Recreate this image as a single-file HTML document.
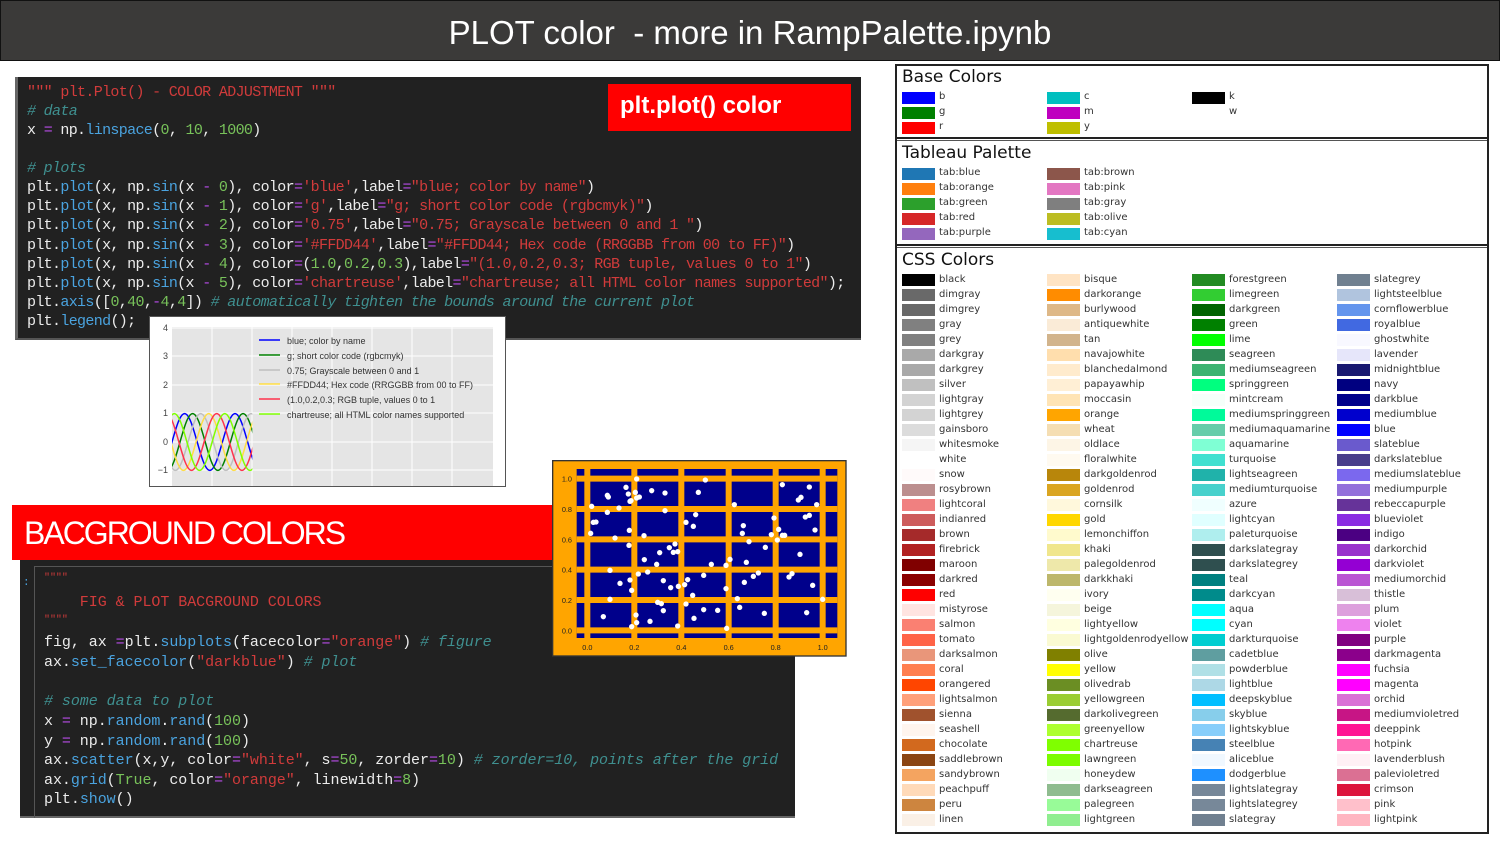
<!DOCTYPE html>
<html><head><meta charset="utf-8"><style>
*{margin:0;padding:0;box-sizing:border-box}
body{width:1500px;height:844px;background:#fff;position:relative;overflow:hidden;font-family:"Liberation Sans",sans-serif}
.hdr{position:absolute;left:0;top:0;width:1500px;height:61px;background:#3b3a39;border:1px solid #111;color:#fff;font-size:33px;text-align:center;line-height:64px}
.code{position:absolute;background:#212121;font-family:"Liberation Mono",monospace;color:#ececec;white-space:pre}
.code div{position:absolute;left:0;height:20px;line-height:20px}
.s{color:#d13b3b}.n{color:#78c25a}.f{color:#4aa3df}.c{color:#3f9090;font-style:italic}.o{color:#b64be6}
.sw{position:absolute;width:33px;height:12px}
.lb{position:absolute;font-family:"DejaVu Sans",sans-serif;font-size:10px;color:#333;line-height:12px}
.ttl{position:absolute;font-family:"DejaVu Sans",sans-serif;font-size:17px;color:#111}
</style></head><body>
<div class="hdr">PLOT color&nbsp; - more in RampPalette.ipynb</div>

<!-- code block 1 -->
<div class="code" style="left:15px;top:77px;width:846px;height:263px;border-left:3px solid #666;border-bottom:2px solid #555;font-size:15px;letter-spacing:-0.66px">
<div style="left:9px;top:6px" class="s">""" plt.Plot() - COLOR ADJUSTMENT """</div>
<div style="left:9px;top:25px" class="c"># data</div>
<div style="left:9px;top:44px">x <span class="o">=</span> np.<span class="f">linspace</span>(<span class="n">0</span>, <span class="n">10</span>, <span class="n">1000</span>)</div>
<div style="left:9px;top:82px" class="c"># plots</div>
<div style="left:9px;top:101px">plt.<span class="f">plot</span>(x, np.<span class="f">sin</span>(x <span class="o">-</span> <span class="n">0</span>), color<span class="o">=</span><span class="s">'blue'</span>,label<span class="o">=</span><span class="s">"blue; color by name"</span>)</div>
<div style="left:9px;top:120px">plt.<span class="f">plot</span>(x, np.<span class="f">sin</span>(x <span class="o">-</span> <span class="n">1</span>), color<span class="o">=</span><span class="s">'g'</span>,label<span class="o">=</span><span class="s">"g; short color code (rgbcmyk)"</span>)</div>
<div style="left:9px;top:139px">plt.<span class="f">plot</span>(x, np.<span class="f">sin</span>(x <span class="o">-</span> <span class="n">2</span>), color<span class="o">=</span><span class="s">'0.75'</span>,label<span class="o">=</span><span class="s">"0.75; Grayscale between 0 and 1 "</span>)</div>
<div style="left:9px;top:159px">plt.<span class="f">plot</span>(x, np.<span class="f">sin</span>(x <span class="o">-</span> <span class="n">3</span>), color<span class="o">=</span><span class="s">'#FFDD44'</span>,label<span class="o">=</span><span class="s">"#FFDD44; Hex code (RRGGBB from 00 to FF)"</span>)</div>
<div style="left:9px;top:178px">plt.<span class="f">plot</span>(x, np.<span class="f">sin</span>(x <span class="o">-</span> <span class="n">4</span>), color<span class="o">=</span>(<span class="n">1.0</span>,<span class="n">0.2</span>,<span class="n">0.3</span>),label<span class="o">=</span><span class="s">"(1.0,0.2,0.3; RGB tuple, values 0 to 1"</span>)</div>
<div style="left:9px;top:197px">plt.<span class="f">plot</span>(x, np.<span class="f">sin</span>(x <span class="o">-</span> <span class="n">5</span>), color<span class="o">=</span><span class="s">'chartreuse'</span>,label<span class="o">=</span><span class="s">"chartreuse; all HTML color names supported"</span>);</div>
<div style="left:9px;top:216px">plt.<span class="f">axis</span>([<span class="n">0</span>,<span class="n">40</span>,<span class="o">-</span><span class="n">4</span>,<span class="n">4</span>]) <span class="c"># automatically tighten the bounds around the current plot</span></div>
<div style="left:9px;top:235px">plt.<span class="f">legend</span>();</div>
</div>
<div style="position:absolute;left:608px;top:84px;width:243px;height:47px;background:#f00;color:#fff;font-weight:bold;font-size:24px;line-height:44px;padding-left:12px">plt.plot() color</div>

<!-- legend plot -->
<div style="position:absolute;left:149px;top:316px;width:357px;height:171px;background:#fff;border:1px solid #555"></div>
<svg style="position:absolute;left:150px;top:317px" width="355" height="169" viewBox="150 317 355 169">
<defs><clipPath id="cp"><rect x="0" y="-40" width="80.3" height="80"/></clipPath></defs>
<rect x="172" y="327" width="321" height="159" fill="#e5e5e5"/>
<g stroke="#fff" stroke-width="1">
<line x1="172" y1="328" x2="493" y2="328"/><line x1="172" y1="356" x2="493" y2="356"/><line x1="172" y1="385" x2="493" y2="385"/><line x1="172" y1="413" x2="493" y2="413"/><line x1="172" y1="442" x2="493" y2="442"/><line x1="172" y1="470" x2="493" y2="470"/>
<line x1="212" y1="327" x2="212" y2="486"/><line x1="252" y1="327" x2="252" y2="486"/><line x1="292" y1="327" x2="292" y2="486"/><line x1="332" y1="327" x2="332" y2="486"/><line x1="372" y1="327" x2="372" y2="486"/><line x1="412" y1="327" x2="412" y2="486"/><line x1="452" y1="327" x2="452" y2="486"/>
</g>
<g font-family="Liberation Sans" font-size="9" fill="#444" text-anchor="end">
<text x="168" y="331">4</text><text x="168" y="359">3</text><text x="168" y="388">2</text><text x="168" y="416">1</text><text x="168" y="445">0</text><text x="168" y="473">−1</text></g>
<g transform="translate(172,442)" clip-path="url(#cp)" fill="none" stroke-width="1.5">
<defs><path id="sn" d="M-100.9,0 c4.114,-14.55 8.049,-28.4 12.61,-28.4 s8.5,13.85 12.61,28.4 s8.049,28.4 12.61,28.4 s8.5,-13.85 12.61,-28.4 s8.049,-28.4 12.61,-28.4 s8.5,13.85 12.61,28.4 s8.049,28.4 12.61,28.4 s8.5,-13.85 12.61,-28.4 s8.049,-28.4 12.61,-28.4 s8.5,13.85 12.61,28.4 s8.049,28.4 12.61,28.4 s8.5,-13.85 12.61,-28.4 s8.049,-28.4 12.61,-28.4 s8.5,13.85 12.61,28.4 s8.049,28.4 12.61,28.4 s8.5,-13.85 12.61,-28.4"/></defs>
<use href="#sn" stroke="#00f"/>
<use href="#sn" stroke="#008000" transform="translate(8.03,0)"/>
<use href="#sn" stroke="#bfbfbf" transform="translate(16.06,0)"/>
<use href="#sn" stroke="#FFDD44" transform="translate(24.09,0)"/>
<use href="#sn" stroke="rgb(255,51,77)" transform="translate(32.12,0)"/>
<use href="#sn" stroke="#7fff00" transform="translate(40.15,0)"/>
</g>
<g stroke-width="1.5">
<line x1="259" y1="340" x2="280" y2="340" stroke="#00f"/><line x1="259" y1="355" x2="280" y2="355" stroke="#008000"/><line x1="259" y1="370" x2="280" y2="370" stroke="#bfbfbf"/><line x1="259" y1="384" x2="280" y2="384" stroke="#FFDD44"/><line x1="259" y1="399" x2="280" y2="399" stroke="rgb(255,51,77)"/><line x1="259" y1="414" x2="280" y2="414" stroke="#7fff00"/>
</g>
<g font-family="Liberation Sans" font-size="9" fill="#333">
<text x="287" y="344">blue; color by name</text><text x="287" y="359">g; short color code (rgbcmyk)</text><text x="287" y="374">0.75; Grayscale between 0 and 1</text><text x="287" y="388">#FFDD44; Hex code (RRGGBB from 00 to FF)</text><text x="287" y="403">(1.0,0.2,0.3; RGB tuple, values 0 to 1</text><text x="287" y="418">chartreuse; all HTML color names supported</text>
</g>
</svg>

<!-- background colors -->
<div style="position:absolute;left:12px;top:505px;width:545px;height:55px;background:#f00;color:#fff;font-size:32px;line-height:56px;padding-left:12px;letter-spacing:-2px">BACGROUND COLORS</div>
<div class="code" style="left:20px;top:560px;width:775px;height:258px;border-bottom:2px solid #666;font-size:15px;letter-spacing:-0.05px">
<div style="left:3px;top:13px;color:#4aa3df;font-size:11px">:</div>
<div style="left:14px;top:6px;width:761px;height:252px;border:1px solid #555;border-right:none;border-bottom:none"></div>
<div style="left:24px;top:9px;font-size:10px" class="s">""""</div>
<div style="left:24px;top:33px" class="s">    FIG &amp; PLOT BACGROUND COLORS</div>
<div style="left:24px;top:51px;font-size:10px" class="s">""""</div>
<div style="left:24px;top:73px">fig, ax <span class="o">=</span>plt.<span class="f">subplots</span>(facecolor<span class="o">=</span><span class="s">"orange"</span>) <span class="c"># figure</span></div>
<div style="left:24px;top:93px">ax.<span class="f">set_facecolor</span>(<span class="s">"darkblue"</span>) <span class="c"># plot</span></div>
<div style="left:24px;top:132px" class="c"># some data to plot</div>
<div style="left:24px;top:152px">x <span class="o">=</span> np.<span class="f">random</span>.<span class="f">rand</span>(<span class="n">100</span>)</div>
<div style="left:24px;top:172px">y <span class="o">=</span> np.<span class="f">random</span>.<span class="f">rand</span>(<span class="n">100</span>)</div>
<div style="left:24px;top:191px">ax.<span class="f">scatter</span>(x,y, color<span class="o">=</span><span class="s">"white"</span>, s<span class="o">=</span><span class="n">50</span>, zorder<span class="o">=</span><span class="n">10</span>) <span class="c"># zorder=10, points after the grid</span></div>
<div style="left:24px;top:211px">ax.<span class="f">grid</span>(<span class="n">True</span>, color<span class="o">=</span><span class="s">"orange"</span>, linewidth<span class="o">=</span><span class="n">8</span>)</div>
<div style="left:24px;top:230px">plt.<span class="f">show</span>()</div>
</div>

<!-- scatter -->
<svg style="position:absolute;left:550px;top:458px" width="300" height="202" viewBox="0 0 900 606">
<rect x="8" y="8" width="880" height="586" fill="#ffa500" stroke="#333" stroke-width="4"/>
<rect x="80" y="33" width="782" height="507" fill="#00008b"/>
<g stroke="#ffa500" stroke-width="18">
<line x1="112" y1="33" x2="112" y2="540"/><line x1="253" y1="33" x2="253" y2="540"/><line x1="394" y1="33" x2="394" y2="540"/><line x1="536" y1="33" x2="536" y2="540"/><line x1="677" y1="33" x2="677" y2="540"/><line x1="818" y1="33" x2="818" y2="540"/>
<line x1="80" y1="62" x2="862" y2="62"/><line x1="80" y1="153" x2="862" y2="153"/><line x1="80" y1="244" x2="862" y2="244"/><line x1="80" y1="335" x2="862" y2="335"/><line x1="80" y1="426" x2="862" y2="426"/><line x1="80" y1="517" x2="862" y2="517"/>
</g>
<g fill="#fff">
<circle cx="260" cy="63" r="8"/><circle cx="466" cy="66" r="8"/><circle cx="228" cy="88" r="8"/><circle cx="235" cy="108" r="8"/><circle cx="256" cy="103" r="8"/><circle cx="305" cy="98" r="8"/><circle cx="345" cy="105" r="8"/><circle cx="445" cy="103" r="8"/><circle cx="172" cy="112" r="8"/><circle cx="175" cy="117" r="8"/><circle cx="240" cy="130" r="8"/><circle cx="260" cy="120" r="8"/><circle cx="268" cy="117" r="8"/><circle cx="243" cy="128" r="8"/><circle cx="125" cy="145" r="8"/><circle cx="207" cy="150" r="8"/><circle cx="172" cy="163" r="8"/><circle cx="345" cy="158" r="8"/><circle cx="553" cy="140" r="8"/><circle cx="697" cy="80" r="8"/><circle cx="778" cy="87" r="8"/><circle cx="745" cy="126" r="8"/><circle cx="753" cy="118" r="8"/><circle cx="800" cy="140" r="8"/><circle cx="672" cy="180" r="8"/><circle cx="437" cy="170" r="8"/><circle cx="408" cy="193" r="8"/><circle cx="430" cy="205" r="8"/><circle cx="130" cy="193" r="8"/><circle cx="138" cy="192" r="8"/><circle cx="122" cy="226" r="8"/><circle cx="195" cy="240" r="8"/><circle cx="238" cy="217" r="8"/><circle cx="282" cy="233" r="8"/><circle cx="580" cy="203" r="8"/><circle cx="577" cy="226" r="8"/><circle cx="686" cy="214" r="8"/><circle cx="664" cy="230" r="8"/><circle cx="697" cy="232" r="8"/><circle cx="704" cy="232" r="8"/><circle cx="682" cy="246" r="8"/><circle cx="597" cy="251" r="8"/><circle cx="646" cy="268" r="8"/><circle cx="795" cy="216" r="8"/><circle cx="766" cy="177" r="8"/><circle cx="778" cy="172" r="8"/><circle cx="237" cy="262" r="8"/><circle cx="358" cy="269" r="8"/><circle cx="375" cy="258" r="8"/><circle cx="370" cy="283" r="8"/><circle cx="383" cy="281" r="8"/><circle cx="329" cy="284" r="8"/><circle cx="283" cy="305" r="8"/><circle cx="320" cy="319" r="8"/><circle cx="540" cy="304" r="8"/><circle cx="528" cy="322" r="8"/><circle cx="484" cy="319" r="8"/><circle cx="589" cy="313" r="8"/><circle cx="750" cy="289" r="8"/><circle cx="180" cy="337" r="8"/><circle cx="265" cy="348" r="8"/><circle cx="293" cy="342" r="8"/><circle cx="240" cy="366" r="8"/><circle cx="210" cy="376" r="8"/><circle cx="340" cy="368" r="8"/><circle cx="413" cy="365" r="8"/><circle cx="362" cy="389" r="8"/><circle cx="385" cy="385" r="8"/><circle cx="404" cy="380" r="8"/><circle cx="461" cy="352" r="8"/><circle cx="610" cy="355" r="8"/><circle cx="625" cy="345" r="8"/><circle cx="583" cy="373" r="8"/><circle cx="717" cy="357" r="8"/><circle cx="726" cy="347" r="8"/><circle cx="788" cy="382" r="8"/><circle cx="245" cy="397" r="8"/><circle cx="428" cy="412" r="8"/><circle cx="528" cy="392" r="8"/><circle cx="562" cy="422" r="8"/><circle cx="180" cy="424" r="8"/><circle cx="323" cy="433" r="8"/><circle cx="334" cy="437" r="8"/><circle cx="340" cy="458" r="8"/><circle cx="408" cy="438" r="8"/><circle cx="461" cy="455" r="8"/><circle cx="503" cy="457" r="8"/><circle cx="569" cy="448" r="8"/><circle cx="643" cy="466" r="8"/><circle cx="770" cy="464" r="8"/><circle cx="160" cy="476" r="8"/><circle cx="258" cy="471" r="8"/><circle cx="300" cy="490" r="8"/><circle cx="245" cy="506" r="8"/><circle cx="260" cy="494" r="8"/><circle cx="383" cy="504" r="8"/><circle cx="432" cy="481" r="8"/><circle cx="530" cy="511" r="8"/><circle cx="818" cy="424" r="8"/>
</g>
<g font-family="Liberation Sans" font-size="22" fill="#222">
<text x="66" y="71" text-anchor="end">1.0</text><text x="66" y="162" text-anchor="end">0.8</text><text x="66" y="253" text-anchor="end">0.6</text><text x="66" y="344" text-anchor="end">0.4</text><text x="66" y="435" text-anchor="end">0.2</text><text x="66" y="526" text-anchor="end">0.0</text>
<g text-anchor="middle"><text x="112" y="576">0.0</text><text x="253" y="576">0.2</text><text x="394" y="576">0.4</text><text x="536" y="576">0.6</text><text x="677" y="576">0.8</text><text x="818" y="576">1.0</text></g>
</g>
</svg>

<!-- color panel -->
<div style="position:absolute;left:895px;top:64px;width:594px;height:770px;border:2px solid #222;background:#fff"></div>
<div style="position:absolute;left:897px;top:137px;width:590px;height:4px;border-top:2px solid #222;border-bottom:1px solid #555"></div>
<div style="position:absolute;left:897px;top:244px;width:590px;height:4px;border-top:2px solid #222;border-bottom:1px solid #555"></div>
<div class="ttl" style="left:902px;top:67px">Base Colors</div>
<div class="ttl" style="left:902px;top:143px">Tableau Palette</div>
<div class="ttl" style="left:902px;top:250px">CSS Colors</div>
<div style="position:absolute;left:0;top:2px">
<div class="sw" style="left:902px;top:90px;background:#00f"></div><div class="lb" style="left:939px;top:89px">b</div>
<div class="sw" style="left:902px;top:105px;background:#008000"></div><div class="lb" style="left:939px;top:104px">g</div>
<div class="sw" style="left:902px;top:120px;background:#f00"></div><div class="lb" style="left:939px;top:119px">r</div>
<div class="sw" style="left:1047px;top:90px;background:#00bfbf"></div><div class="lb" style="left:1084px;top:89px">c</div>
<div class="sw" style="left:1047px;top:105px;background:#bf00bf"></div><div class="lb" style="left:1084px;top:104px">m</div>
<div class="sw" style="left:1047px;top:120px;background:#bfbf00"></div><div class="lb" style="left:1084px;top:119px">y</div>
<div class="sw" style="left:1192px;top:90px;background:#000"></div><div class="lb" style="left:1229px;top:89px">k</div>
<div class="lb" style="left:1229px;top:104px">w</div>
<div class="sw" style="left:902px;top:166px;background:#1f77b4"></div><div class="lb" style="left:939px;top:165px">tab:blue</div>
<div class="sw" style="left:902px;top:181px;background:#ff7f0e"></div><div class="lb" style="left:939px;top:180px">tab:orange</div>
<div class="sw" style="left:902px;top:196px;background:#2ca02c"></div><div class="lb" style="left:939px;top:195px">tab:green</div>
<div class="sw" style="left:902px;top:211px;background:#d62728"></div><div class="lb" style="left:939px;top:210px">tab:red</div>
<div class="sw" style="left:902px;top:226px;background:#9467bd"></div><div class="lb" style="left:939px;top:225px">tab:purple</div>
<div class="sw" style="left:1047px;top:166px;background:#8c564b"></div><div class="lb" style="left:1084px;top:165px">tab:brown</div>
<div class="sw" style="left:1047px;top:181px;background:#e377c2"></div><div class="lb" style="left:1084px;top:180px">tab:pink</div>
<div class="sw" style="left:1047px;top:196px;background:#7f7f7f"></div><div class="lb" style="left:1084px;top:195px">tab:gray</div>
<div class="sw" style="left:1047px;top:211px;background:#bcbd22"></div><div class="lb" style="left:1084px;top:210px">tab:olive</div>
<div class="sw" style="left:1047px;top:226px;background:#17becf"></div><div class="lb" style="left:1084px;top:225px">tab:cyan</div>
</div>
<div style="position:absolute;left:902px;top:274px;width:580px;display:grid;grid-template-columns:145px 145px 145px 145px;grid-template-rows:repeat(37,15px);grid-auto-flow:column;font-family:'DejaVu Sans',sans-serif;font-size:10px;color:#333">
<style>.r{position:relative;height:15px}.r i{position:absolute;left:0;top:0;width:33px;height:12px}.r b{position:absolute;left:37px;top:0;font-weight:normal;line-height:12px;white-space:nowrap}</style>
<div class="r"><i style="background:black"></i><b>black</b></div><div class="r"><i style="background:dimgray"></i><b>dimgray</b></div><div class="r"><i style="background:dimgrey"></i><b>dimgrey</b></div><div class="r"><i style="background:gray"></i><b>gray</b></div><div class="r"><i style="background:grey"></i><b>grey</b></div><div class="r"><i style="background:darkgray"></i><b>darkgray</b></div><div class="r"><i style="background:darkgrey"></i><b>darkgrey</b></div><div class="r"><i style="background:silver"></i><b>silver</b></div><div class="r"><i style="background:lightgray"></i><b>lightgray</b></div><div class="r"><i style="background:lightgrey"></i><b>lightgrey</b></div><div class="r"><i style="background:gainsboro"></i><b>gainsboro</b></div><div class="r"><i style="background:whitesmoke"></i><b>whitesmoke</b></div><div class="r"><i style="background:white"></i><b>white</b></div><div class="r"><i style="background:snow"></i><b>snow</b></div><div class="r"><i style="background:rosybrown"></i><b>rosybrown</b></div><div class="r"><i style="background:lightcoral"></i><b>lightcoral</b></div><div class="r"><i style="background:indianred"></i><b>indianred</b></div><div class="r"><i style="background:brown"></i><b>brown</b></div><div class="r"><i style="background:firebrick"></i><b>firebrick</b></div><div class="r"><i style="background:maroon"></i><b>maroon</b></div><div class="r"><i style="background:darkred"></i><b>darkred</b></div><div class="r"><i style="background:red"></i><b>red</b></div><div class="r"><i style="background:mistyrose"></i><b>mistyrose</b></div><div class="r"><i style="background:salmon"></i><b>salmon</b></div><div class="r"><i style="background:tomato"></i><b>tomato</b></div><div class="r"><i style="background:darksalmon"></i><b>darksalmon</b></div><div class="r"><i style="background:coral"></i><b>coral</b></div><div class="r"><i style="background:orangered"></i><b>orangered</b></div><div class="r"><i style="background:lightsalmon"></i><b>lightsalmon</b></div><div class="r"><i style="background:sienna"></i><b>sienna</b></div><div class="r"><i style="background:seashell"></i><b>seashell</b></div><div class="r"><i style="background:chocolate"></i><b>chocolate</b></div><div class="r"><i style="background:saddlebrown"></i><b>saddlebrown</b></div><div class="r"><i style="background:sandybrown"></i><b>sandybrown</b></div><div class="r"><i style="background:peachpuff"></i><b>peachpuff</b></div><div class="r"><i style="background:peru"></i><b>peru</b></div><div class="r"><i style="background:linen"></i><b>linen</b></div>
<div class="r"><i style="background:bisque"></i><b>bisque</b></div><div class="r"><i style="background:darkorange"></i><b>darkorange</b></div><div class="r"><i style="background:burlywood"></i><b>burlywood</b></div><div class="r"><i style="background:antiquewhite"></i><b>antiquewhite</b></div><div class="r"><i style="background:tan"></i><b>tan</b></div><div class="r"><i style="background:navajowhite"></i><b>navajowhite</b></div><div class="r"><i style="background:blanchedalmond"></i><b>blanchedalmond</b></div><div class="r"><i style="background:papayawhip"></i><b>papayawhip</b></div><div class="r"><i style="background:moccasin"></i><b>moccasin</b></div><div class="r"><i style="background:orange"></i><b>orange</b></div><div class="r"><i style="background:wheat"></i><b>wheat</b></div><div class="r"><i style="background:oldlace"></i><b>oldlace</b></div><div class="r"><i style="background:floralwhite"></i><b>floralwhite</b></div><div class="r"><i style="background:darkgoldenrod"></i><b>darkgoldenrod</b></div><div class="r"><i style="background:goldenrod"></i><b>goldenrod</b></div><div class="r"><i style="background:cornsilk"></i><b>cornsilk</b></div><div class="r"><i style="background:gold"></i><b>gold</b></div><div class="r"><i style="background:lemonchiffon"></i><b>lemonchiffon</b></div><div class="r"><i style="background:khaki"></i><b>khaki</b></div><div class="r"><i style="background:palegoldenrod"></i><b>palegoldenrod</b></div><div class="r"><i style="background:darkkhaki"></i><b>darkkhaki</b></div><div class="r"><i style="background:ivory"></i><b>ivory</b></div><div class="r"><i style="background:beige"></i><b>beige</b></div><div class="r"><i style="background:lightyellow"></i><b>lightyellow</b></div><div class="r"><i style="background:lightgoldenrodyellow"></i><b>lightgoldenrodyellow</b></div><div class="r"><i style="background:olive"></i><b>olive</b></div><div class="r"><i style="background:yellow"></i><b>yellow</b></div><div class="r"><i style="background:olivedrab"></i><b>olivedrab</b></div><div class="r"><i style="background:yellowgreen"></i><b>yellowgreen</b></div><div class="r"><i style="background:darkolivegreen"></i><b>darkolivegreen</b></div><div class="r"><i style="background:greenyellow"></i><b>greenyellow</b></div><div class="r"><i style="background:chartreuse"></i><b>chartreuse</b></div><div class="r"><i style="background:lawngreen"></i><b>lawngreen</b></div><div class="r"><i style="background:honeydew"></i><b>honeydew</b></div><div class="r"><i style="background:darkseagreen"></i><b>darkseagreen</b></div><div class="r"><i style="background:palegreen"></i><b>palegreen</b></div><div class="r"><i style="background:lightgreen"></i><b>lightgreen</b></div>
<div class="r"><i style="background:forestgreen"></i><b>forestgreen</b></div><div class="r"><i style="background:limegreen"></i><b>limegreen</b></div><div class="r"><i style="background:darkgreen"></i><b>darkgreen</b></div><div class="r"><i style="background:green"></i><b>green</b></div><div class="r"><i style="background:lime"></i><b>lime</b></div><div class="r"><i style="background:seagreen"></i><b>seagreen</b></div><div class="r"><i style="background:mediumseagreen"></i><b>mediumseagreen</b></div><div class="r"><i style="background:springgreen"></i><b>springgreen</b></div><div class="r"><i style="background:mintcream"></i><b>mintcream</b></div><div class="r"><i style="background:mediumspringgreen"></i><b>mediumspringgreen</b></div><div class="r"><i style="background:mediumaquamarine"></i><b>mediumaquamarine</b></div><div class="r"><i style="background:aquamarine"></i><b>aquamarine</b></div><div class="r"><i style="background:turquoise"></i><b>turquoise</b></div><div class="r"><i style="background:lightseagreen"></i><b>lightseagreen</b></div><div class="r"><i style="background:mediumturquoise"></i><b>mediumturquoise</b></div><div class="r"><i style="background:azure"></i><b>azure</b></div><div class="r"><i style="background:lightcyan"></i><b>lightcyan</b></div><div class="r"><i style="background:paleturquoise"></i><b>paleturquoise</b></div><div class="r"><i style="background:darkslategray"></i><b>darkslategray</b></div><div class="r"><i style="background:darkslategrey"></i><b>darkslategrey</b></div><div class="r"><i style="background:teal"></i><b>teal</b></div><div class="r"><i style="background:darkcyan"></i><b>darkcyan</b></div><div class="r"><i style="background:aqua"></i><b>aqua</b></div><div class="r"><i style="background:cyan"></i><b>cyan</b></div><div class="r"><i style="background:darkturquoise"></i><b>darkturquoise</b></div><div class="r"><i style="background:cadetblue"></i><b>cadetblue</b></div><div class="r"><i style="background:powderblue"></i><b>powderblue</b></div><div class="r"><i style="background:lightblue"></i><b>lightblue</b></div><div class="r"><i style="background:deepskyblue"></i><b>deepskyblue</b></div><div class="r"><i style="background:skyblue"></i><b>skyblue</b></div><div class="r"><i style="background:lightskyblue"></i><b>lightskyblue</b></div><div class="r"><i style="background:steelblue"></i><b>steelblue</b></div><div class="r"><i style="background:aliceblue"></i><b>aliceblue</b></div><div class="r"><i style="background:dodgerblue"></i><b>dodgerblue</b></div><div class="r"><i style="background:lightslategray"></i><b>lightslategray</b></div><div class="r"><i style="background:lightslategrey"></i><b>lightslategrey</b></div><div class="r"><i style="background:slategray"></i><b>slategray</b></div>
<div class="r"><i style="background:slategrey"></i><b>slategrey</b></div><div class="r"><i style="background:lightsteelblue"></i><b>lightsteelblue</b></div><div class="r"><i style="background:cornflowerblue"></i><b>cornflowerblue</b></div><div class="r"><i style="background:royalblue"></i><b>royalblue</b></div><div class="r"><i style="background:ghostwhite"></i><b>ghostwhite</b></div><div class="r"><i style="background:lavender"></i><b>lavender</b></div><div class="r"><i style="background:midnightblue"></i><b>midnightblue</b></div><div class="r"><i style="background:navy"></i><b>navy</b></div><div class="r"><i style="background:darkblue"></i><b>darkblue</b></div><div class="r"><i style="background:mediumblue"></i><b>mediumblue</b></div><div class="r"><i style="background:blue"></i><b>blue</b></div><div class="r"><i style="background:slateblue"></i><b>slateblue</b></div><div class="r"><i style="background:darkslateblue"></i><b>darkslateblue</b></div><div class="r"><i style="background:mediumslateblue"></i><b>mediumslateblue</b></div><div class="r"><i style="background:mediumpurple"></i><b>mediumpurple</b></div><div class="r"><i style="background:rebeccapurple"></i><b>rebeccapurple</b></div><div class="r"><i style="background:blueviolet"></i><b>blueviolet</b></div><div class="r"><i style="background:indigo"></i><b>indigo</b></div><div class="r"><i style="background:darkorchid"></i><b>darkorchid</b></div><div class="r"><i style="background:darkviolet"></i><b>darkviolet</b></div><div class="r"><i style="background:mediumorchid"></i><b>mediumorchid</b></div><div class="r"><i style="background:thistle"></i><b>thistle</b></div><div class="r"><i style="background:plum"></i><b>plum</b></div><div class="r"><i style="background:violet"></i><b>violet</b></div><div class="r"><i style="background:purple"></i><b>purple</b></div><div class="r"><i style="background:darkmagenta"></i><b>darkmagenta</b></div><div class="r"><i style="background:fuchsia"></i><b>fuchsia</b></div><div class="r"><i style="background:magenta"></i><b>magenta</b></div><div class="r"><i style="background:orchid"></i><b>orchid</b></div><div class="r"><i style="background:mediumvioletred"></i><b>mediumvioletred</b></div><div class="r"><i style="background:deeppink"></i><b>deeppink</b></div><div class="r"><i style="background:hotpink"></i><b>hotpink</b></div><div class="r"><i style="background:lavenderblush"></i><b>lavenderblush</b></div><div class="r"><i style="background:palevioletred"></i><b>palevioletred</b></div><div class="r"><i style="background:crimson"></i><b>crimson</b></div><div class="r"><i style="background:pink"></i><b>pink</b></div><div class="r"><i style="background:lightpink"></i><b>lightpink</b></div>
</div>
</body></html>
